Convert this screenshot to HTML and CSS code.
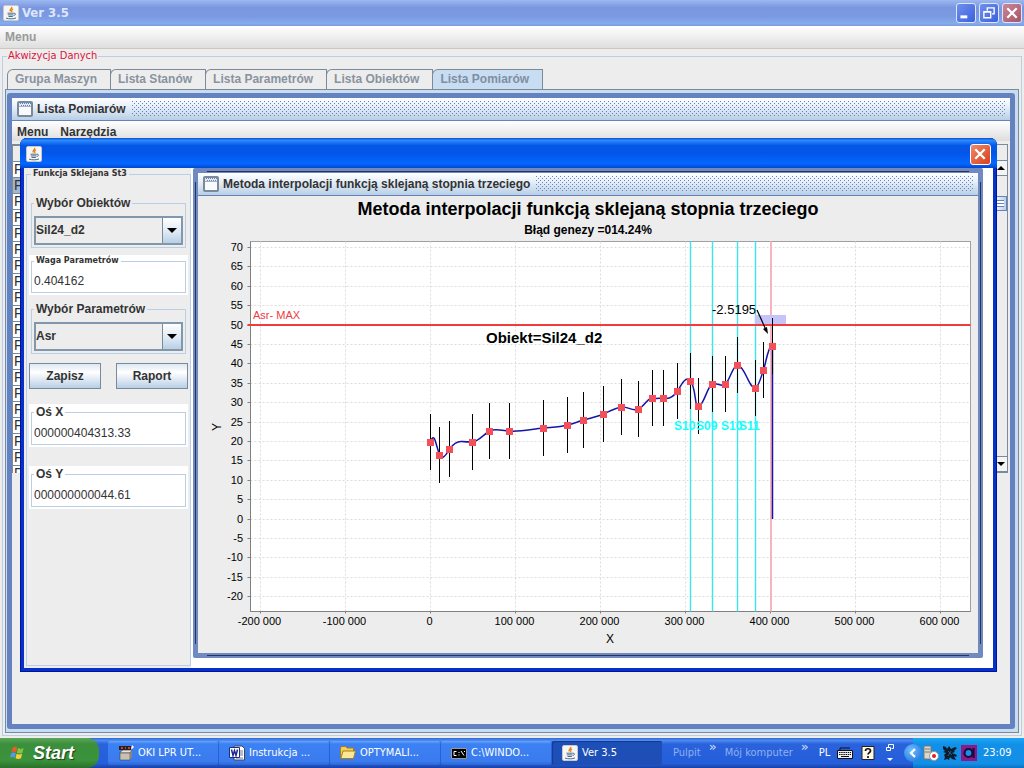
FILE: index.html
```
<!DOCTYPE html>
<html lang="pl">
<head>
    <meta charset="UTF-8">
    <meta name="viewport" content="width=device-width, initial-scale=1.0">
    <title>Ver 3.5</title>
    <link rel="stylesheet" href="styles.css">
</head>
<body>
    <!-- shared icons -->
    <svg class="sprite" aria-hidden="true">
        <symbol id="java" viewBox="0 0 16 16">
            <rect x=".5" y=".5" width="15" height="15" rx="1.5" fill="#f6f6f4" stroke="#c9c9cc"/>
            <path d="M8.6 1.8c1 1.5-2.6 2.400-1.300 4.700M10 3.800c-1.800.900-1.900 1.800-.900 3.200" fill="none" stroke="#e8871e" stroke-width="1.400"/>
            <path d="M4.500 8.200h6.200M4.800 9.900h5.600M5.500 11.500h4.300M10.700 8.300c2.500-.5 2.300 1.900-.1 2.300M3 13.100c2.500 1 8 1 10-.2" fill="none" stroke="#4a6c8e" stroke-width="1"/>
        </symbol>
        <symbol id="frame" viewBox="0 0 16 16">
            <rect x="1" y="1" width="14" height="14" rx="1" fill="#f8fafd" stroke="#7a8a99" stroke-width="2"/>
            <path d="M2 2h12v3H2z" fill="#dfeaf6"/>
            <path d="M3 2.500h11M4 4.500h10" stroke="#6382bf" stroke-dasharray="1 1"/>
            <path d="M2 5.500h12" stroke="#a5b3c2"/>
        </symbol>
        <symbol id="close" viewBox="0 0 21 21">
            <path d="M5 5l11 11M16 5L5 16" stroke="#fff" stroke-width="2.600"/>
        </symbol>
    </svg>

    <header class="titlebar">
        <svg class="icon"><use href="#java"/></svg>
        <span class="app-name">Ver 3.5</span>
        <button class="win-btn" aria-label="Minimalizuj"><svg viewBox="0 0 21 21"><path d="M4 15h8" stroke="#fff" stroke-width="3.500"/></svg></button>
        <button class="win-btn" aria-label="Przywróć"><svg viewBox="0 0 21 21"><path d="M8.500 8V4.500h8v7H14M8 4.500h9" fill="none" stroke="#fff" stroke-width="1.600"/><path d="M4.500 9h8v7h-8zM4 9.500h9" fill="none" stroke="#fff" stroke-width="1.600"/></svg></button>
        <button class="win-btn win-close" aria-label="Zamknij"><svg><use href="#close"/></svg></button>
    </header>
    <nav class="menubar main-menu"><button class="menu-item">Menu</button></nav>

    <main class="workspace">
        <fieldset class="acquisition">
            <legend>Akwizycja Danych</legend>
            <div class="tabs" role="tablist">
                <button class="tab" role="tab">Grupa Maszyn</button>
                <button class="tab" role="tab">Lista Stanów</button>
                <button class="tab" role="tab">Lista Parametrów</button>
                <button class="tab" role="tab">Lista Obiektów</button>
                <button class="tab active" role="tab" aria-selected="true">Lista Pomiarów</button>
            </div>
            <div class="tab-body">
                <section class="iframe list-frame">
                    <div class="iframe-title">
                        <svg class="icon"><use href="#frame"/></svg>
                        <h2>Lista Pomiarów</h2>
                        <i class="bumps"></i>
                    </div>
                    <nav class="menubar"><button class="menu-item">Menu</button><button class="menu-item">Narzędzia</button></nav>
                    <div class="list-pane">
                        <div class="list-view">
                            <table>
                                <thead><tr><th></th></tr></thead>
                                <tbody id="rows"></tbody>
                            </table>
                        </div>
                        <div class="scrollbar">
                            <button class="arrow" aria-label="W górę"><svg viewBox="0 0 10 5"><path d="M0 5l5-5 5 5z"/></svg></button>
                            <div class="track"><div class="thumb"></div></div>
                            <button class="arrow" aria-label="W dół"><svg viewBox="0 0 10 5"><path d="M0 0l5 5 5-5z"/></svg></button>
                        </div>
                    </div>
                </section>
            </div>
        </fieldset>

        <section class="dialog">
            <div class="dialog-title">
                <svg class="icon"><use href="#java"/></svg>
                <button class="win-btn win-close" aria-label="Zamknij"><svg><use href="#close"/></svg></button>
            </div>
            <div class="dialog-body">
                <aside class="side">
                    <fieldset class="spline">
                        <legend class="small">Funkcja Sklejana St3</legend>
                        <fieldset class="group">
                            <legend><label for="object">Wybór Obiektów</label></legend>
                            <div class="combo">
                                <select id="object"><option>Sil24_d2</option></select>
                                <svg viewBox="0 0 10 5"><path d="M0 0l5 5 5-5z"/></svg>
                            </div>
                        </fieldset>
                        <div class="field">
                            <fieldset>
                                <legend class="small"><label for="weight">Waga Parametrów</label></legend>
                                <input type="text" id="weight" value="0.404162">
                            </fieldset>
                        </div>
                        <fieldset class="group">
                            <legend><label for="param">Wybór Parametrów</label></legend>
                            <div class="combo">
                                <select id="param"><option>Asr</option></select>
                                <svg viewBox="0 0 10 5"><path d="M0 0l5 5 5-5z"/></svg>
                            </div>
                        </fieldset>
                        <div class="actions">
                            <button class="btn">Zapisz</button>
                            <button class="btn">Raport</button>
                        </div>
                        <div class="field axis">
                            <fieldset>
                                <legend><label for="axisX">Oś X</label></legend>
                                <input type="text" id="axisX" value="000000404313.33">
                            </fieldset>
                        </div>
                        <div class="field axis">
                            <fieldset>
                                <legend><label for="axisY">Oś Y</label></legend>
                                <input type="text" id="axisY" value="000000000044.61">
                            </fieldset>
                        </div>
                    </fieldset>
                </aside>
                <section class="iframe chart-frame">
                    <div class="iframe-title">
                        <svg class="icon"><use href="#frame"/></svg>
                        <h2>Metoda interpolacji funkcją sklejaną stopnia trzeciego</h2>
                        <i class="bumps"></i>
                    </div>
                    <svg class="chart" id="chart" viewBox="198 196 780 457"></svg>
                </section>
            </div>
        </section>
    </main>

    <footer class="taskbar">
        <button class="start">
            <svg viewBox="0 0 18 18">
                <path d="M3 3c2-1.500 3.500-1.200 5 0L6.800 8.200C5.200 7 3.500 7 1.600 8.200z" fill="#f0592a"/>
                <path d="M9 3.500c2 1.200 4 1.200 6.300 0L14 8.700c-2 1.200-4 1.200-6.200 0z" fill="#83c441"/>
                <path d="M1.400 9.300c2-1.200 3.600-1.200 5.200 0l-1.300 5c-1.500-1.200-3.200-1.200-5.200 0z" fill="#5b95f0"/>
                <path d="M7.500 9.800c2 1.200 4 1.200 6.200 0l-1.300 5c-2 1.200-4 1.200-6.200 0z" fill="#fbcf3b"/>
            </svg>
            Start
        </button>
        <div class="tasks">
            <button class="task">
                <svg viewBox="0 0 16 16"><path d="M1 1h12v4H1z" fill="#222"/><path d="M3 2h2v2H3zM7 2h1v2H7zM10 2h2v2h-2z" fill="#d33"/><path d="M14 0l2 2-3 3z" fill="#fff"/><path d="M2 7l3-2h9l-2 3H2z" fill="#e8e4da" stroke="#333" stroke-width=".6"/><path d="M2 8h10v7H2z" fill="#c9c1b5" stroke="#444" stroke-width=".6"/><path d="M12 8l2-3v7l-2 3z" fill="#8c8478"/></svg>
                OKI LPR UT...
            </button>
            <button class="task">
                <svg viewBox="0 0 16 16"><path d="M5 1h8l2.500 2.500V15H5z" fill="#fff" stroke="#445"/><path d="M10 6h4M10 8h4M10 10h4M7 13h7" stroke="#67a"/><path d="M.5 2.500h10v10H.5z" fill="#fff" stroke="#1c2c8c"/><path d="M2.500 4.500l1.500 6 1.500-5 1.500 5 1.500-6" fill="none" stroke="#1c2c8c" stroke-width="1.500"/></svg>
                Instrukcja ...
            </button>
            <button class="task">
                <svg viewBox="0 0 16 16"><path d="M.5 13V3l1-1.500h4L7 3h6.500v10z" fill="#f3cf5b" stroke="#a57d1d"/><path d="M.8 13.500L3 6h12.500l-2 7.500z" fill="#fbe897" stroke="#a57d1d"/></svg>
                OPTYMALI...
            </button>
            <button class="task">
                <svg viewBox="0 0 16 16"><path d="M.5 3.500h15v10H.5z" fill="#000" stroke="#999"/><path d="M5.500 6.500H3v4h2.500M7.500 7.500h1M7.500 10h1M10 6l3 4.500M13.500 6v1" fill="none" stroke="#fff"/></svg>
                C:\WINDO...
            </button>
            <button class="task active">
                <svg><use href="#java"/></svg>
                Ver 3.5
            </button>
        </div>
        <div class="toolbars">
            <span>Pulpit</span><b>»</b>
            <span>Mój komputer</span><b>»</b>
        </div>
        <div class="lang">
            <span>PL</span>
            <svg viewBox="0 0 16 16"><path d="M3 5V3h10" fill="none" stroke="#111"/><path d="M.5 5.500h15v8H.5z" fill="#eee" stroke="#111"/><path d="M2 7.500h12M2 9.500h12" stroke="#111" stroke-dasharray="1.500 .7"/><path d="M4 11.500h8" stroke="#111"/></svg>
            <svg viewBox="0 0 16 16"><path d="M2 1.500h12v13H2z" fill="#fffbe6" stroke="#222"/><path d="M5.500 6c0-3 5-3 5 0 0 1.500-2.500 1.700-2.500 3.500M8 11v2" fill="none" stroke="#111" stroke-width="1.700"/></svg>
            <svg class="mini" viewBox="0 0 10 20"><path d="M3.500 4.500v-3h5v4h-2M1.500 4.500h4v3h-4z" fill="none" stroke="#fff"/><path d="M2 15h6l-3 3z" fill="#fff"/></svg>
        </div>
        <div class="tray">
            <button class="expand" aria-label="Pokaż ukryte ikony"><svg viewBox="0 0 18 18"><path d="M11 5L7 9l4 4" fill="none" stroke="#fff" stroke-width="2.200"/></svg></button>
            <svg viewBox="0 0 16 16"><path d="M1 1h7v13H1z" fill="#ddd8c8" stroke="#777"/><path d="M2 4h5M2 7h5" stroke="#777"/><circle cx="11" cy="11" r="4.500" fill="#fff" stroke="#999"/><circle cx="11" cy="11" r="2" fill="#e02020"/></svg>
            <svg viewBox="0 0 16 16"><path d="M1 1l3 1 1 2 2-3 2 3 4-2 2 1-3 3 1 1-3 1 5 2-1 2-2-1 2 4-4-1-2-2-1 3-2-1-3 1 1-3-1-2 2-2-3-1 2-1-2-2z" fill="#0c1c2c"/><path d="M6 6l4 4M9 6l-3 5" stroke="#2a5a8a"/></svg>
            <svg viewBox="0 0 16 16"><path d="M0 0h16v16H0z" fill="#8a1a8a"/><circle cx="7.500" cy="8" r="4" fill="#1a8fe8" stroke="#1b0b3b" stroke-width="2.200"/><path d="M12.500 3v10" stroke="#1b0b3b" stroke-width="2.200"/></svg>
            <time>23:09</time>
        </div>
    </footer>
    <script src="script.js"></script>
</body>
</html>
```

FILE: styles.css
```
* {
    box-sizing: border-box;
}
body {
    margin: 0;
    height: 100vh;
    display: flex;
    flex-direction: column;
    overflow: hidden;
    background: #ededed;
    color: #333;
    font: bold 12px/14px "Liberation Sans", Arial, sans-serif;
}
button, input, select {
    font: inherit;
    color: inherit;
    margin: 0;
    padding: 0;
    border: none;
    background: none;
}
fieldset {
    margin: 0;
    padding: 0;
    border: 1px solid #b8cfe5;
    min-width: 0;
}
h2 {
    margin: 0;
    font-size: 12px;
    white-space: nowrap;
}
.sprite {
    position: absolute;
    width: 0;
    height: 0;
}
.icon {
    width: 16px;
    height: 16px;
    flex: none;
}

/* main window */
.titlebar {
    display: flex;
    align-items: center;
    gap: 3px;
    height: 26px;
    padding: 0 2px 0 3px;
    background: linear-gradient(#9cb8f0, #7a96df 30%, #7b9ae2 65%, #84aceb 90%, #7a9ae0);
}
.app-name {
    flex: 1;
    font: bold 13px/16px "DejaVu Sans Condensed", "DejaVu Sans", sans-serif;
    color: #dde6fb;
}
.win-btn {
    width: 20px;
    height: 20px;
    border: 1px solid #dfe6fa;
    border-radius: 3px;
    background: linear-gradient(135deg, #6f90ee, #3c60dc);
}
.win-btn svg {
    display: block;
    width: 18px;
    height: 18px;
}
.titlebar .win-close {
    background: linear-gradient(135deg, #c98798, #a85468);
}
.menubar {
    display: flex;
    gap: 12px;
    flex: none;
    height: 23px;
    padding: 0 5px;
    background: linear-gradient(#fff, #dedede 85%, #ededed 86%);
}
.menu-item {
    height: 21px;
}
.main-menu {
    color: #999;
    border-bottom: 1px solid #ccc8c0;
    background: linear-gradient(#fff, #dedede);
}
.workspace {
    flex: 1;
    min-height: 0;
    padding: 0 2px 2px;
}
.acquisition {
    display: flex;
    flex-direction: column;
    height: 100%;
    padding: 6px 2px 2px;
}
.acquisition > legend {
    margin-left: 2px;
    padding: 0 1px;
    color: #dc143c;
    font: 11px/14px "DejaVu Sans Condensed", "DejaVu Sans", sans-serif;
}
.tabs {
    display: flex;
    padding-left: 2px;
}
.tab {
    height: 20px;
    padding: 0 13px 1px 7px;
    margin-right: -1px;
    border: 1px solid #7a8a99;
    border-bottom: none;
    border-top-left-radius: 6px;
    color: #8893a0;
}
.tab.active {
    background: #c8ddf2;
    color: #7e8ea3;
}
.tab-body {
    flex: 1;
    min-height: 0;
    padding: 3px;
    padding-left: 1px;
    border: 1px solid #7a8a99;
    background: #c8ddf2;
}

/* internal frames */
.iframe {
    display: flex;
    flex-direction: column;
    background: #ededed;
}
.iframe-title {
    display: flex;
    align-items: center;
    gap: 4px;
    flex: none;
    height: 23px;
    padding: 0 5px;
    border-bottom: 1px solid #6382bf;
    background: linear-gradient(#fff, #e6eff8 40%, #b8cfe5);
}
.bumps {
    flex: 1;
    height: 16px;
    margin-left: 2px;
    background:
        conic-gradient(at 1px 1px, transparent 75%, #6382bf 0) 0 0 / 4px 4px,
        conic-gradient(at 1px 1px, transparent 75%, #6382bf 0) 2px 2px / 4px 4px;
}
.list-frame {
    height: 100%;
    border: 5px solid #6382bf;
    border-radius: 3px;
}
.list-pane {
    display: flex;
    height: 329px;
    padding-right: 2px;
}
.list-view {
    flex: 1;
    overflow: hidden;
    border-top: 1px solid #7a8a99;
    background: #fff;
}
table {
    width: 100%;
    border-collapse: collapse;
    font-weight: normal;
    font-size: 14px;
}
th, td {
    height: 16px;
    padding: 0 0 0 1px;
    border: 1px solid #7a8a99;
    line-height: 15px;
    text-align: left;
}
th {
    background: #ededed;
}
tr.selected td {
    background: #a3b8cc;
}
.scrollbar {
    display: flex;
    flex-direction: column;
    width: 16px;
    padding-top: 15px;
    border: 1px solid #7a8a99;
}
.arrow {
    height: 16px;
    padding-left: 2px;
    border: 1px solid #7a8a99;
    border-width: 1px 0;
    background: #f4f4f4;
}
.arrow svg {
    display: block;
    width: 8px;
    height: 4px;
    margin: 0 auto;
}
.track {
    flex: 1;
    padding-top: 20px;
}
.thumb {
    height: 15px;
    border: 1px solid #6382bf;
    background: repeating-linear-gradient(#6382bf 0 1px, #fff 1px 3px) right 2px center / 8px 7px no-repeat, linear-gradient(90deg, #fff, #b8cfe5);
}

/* dialog floating over the list */
.dialog {
    position: absolute;
    inset: 138px 27px 96px 20px;
    display: flex;
    flex-direction: column;
    padding: 0 4px 4px;
    border-radius: 7px 7px 0 0;
    background: #0831c9;
    box-shadow: inset 0 0 0 1px #00139c;
}
.dialog-title {
    display: flex;
    align-items: center;
    justify-content: space-between;
    flex: none;
    height: 30px;
    margin: 0 -4px;
    padding: 2px 6px 0 6px;
    border-radius: 7px 7px 0 0;
    background: linear-gradient(#0f4fd0, #2b8bff 8%, #0558e6 25%, #0355e8 50%, #0467ff 85%, #0247cf);
}
.dialog-title .win-close {
    width: 21px;
    height: 21px;
    border-color: #fff;
    background: linear-gradient(135deg, #ee8a6a, #d8401c);
}
.dialog-body {
    display: flex;
    gap: 2px;
    flex: 1;
    min-height: 0;
    background: #fff;
}
.side {
    flex: none;
    width: 167px;
    padding: 0 0 2px 2px;
    background: #ededed;
}
.spline {
    display: flex;
    flex-direction: column;
    height: 100%;
    padding: 16px 2px 0;
}
legend {
    margin-left: 2px;
    padding: 0 2px;
    line-height: 14px;
}
.small {
    font: bold 8px/12px "DejaVu Sans", sans-serif;
}
.group {
    margin: 0 2px 7px;
    padding: 6px 2px 2px;
}
.group > legend {
    margin-left: 0;
}
.combo {
    display: flex;
    align-items: center;
    height: 29px;
    border: 2px solid #8397ab;
    background: linear-gradient(#fff, #dbe7f3 60%, #b8cfe5) right / 18px 100% no-repeat;
}
.combo select {
    flex: 1;
    min-width: 0;
    height: 25px;
    padding: 0 0 2px;
    border-right: 1px solid #7a8a99;
    border-radius: 0;
    background: #ededed;
    appearance: none;
}
.combo svg {
    width: 10px;
    height: 5px;
    margin: 0 4px;
}
.field {
    margin-bottom: 7px;
    padding: 0 2px 2px;
    background: #fff;
}
.field input {
    display: block;
    width: 100%;
    height: 25px;
    padding: 3px 2px 0;
    font-weight: normal;
}
.actions {
    display: flex;
    justify-content: space-between;
    margin: 2px 0 15px;
}
.btn {
    width: 72px;
    height: 26px;
    border: 1px solid #7a8a99;
    background: linear-gradient(#dde8f3, #fff 35%, #b8cfe5);
}
.axis {
    margin-bottom: 19px;
    padding-top: 1px;
}
.chart-frame {
    flex: 1;
    min-width: 0;
    margin: 0 10px 10px 0;
    padding: 5px;
    border-radius: 2px;
    /* thin dark lines between the resize corners */
    background:
        linear-gradient(#24365f, #24365f) 14px 3px / calc(100% - 28px) 1px no-repeat,
        linear-gradient(#24365f, #24365f) 14px calc(100% - 2px) / calc(100% - 28px) 1px no-repeat,
        linear-gradient(#24365f, #24365f) 2px 14px / 1px calc(100% - 28px) no-repeat,
        linear-gradient(#24365f, #24365f) calc(100% - 2px) 14px / 1px calc(100% - 28px) no-repeat,
        #7089c0;
}

/* chart */
.chart {
    display: block;
    flex: 1;
    width: 100%;
    min-height: 0;
    background: #ededed;
    font: 11px "Liberation Sans", Arial, sans-serif;
}
.chart text {
    fill: #000;
}
.chart .title {
    font: bold 18px "Liberation Sans", Arial, sans-serif;
}
.chart .subtitle {
    font: bold 12px "Liberation Sans", Arial, sans-serif;
}
.chart .object {
    font: bold 15px "Liberation Sans", Arial, sans-serif;
}
.chart .limit {
    fill: #f03c3c;
}
.chart .state {
    font: bold 12px "Liberation Sans", Arial, sans-serif;
    fill: #1ff;
}
.chart .value {
    font-size: 13px;
}
.chart .axis-name {
    font-size: 12px;
}

/* taskbar */
.taskbar {
    display: flex;
    flex: none;
    height: 30px;
    background: linear-gradient(#3168d5, #4a8cf0 8%, #2b62dc 20%, #245edb 85%, #1941a5);
    color: #fff;
    font: 11px/14px "DejaVu Sans Condensed", "DejaVu Sans", sans-serif;
}
.start {
    display: flex;
    align-items: center;
    gap: 7px;
    width: 99px;
    padding-left: 10px;
    border-radius: 0 12px 12px 0;
    background: linear-gradient(#5aa85a, #3c8f3c 20%, #3a933a 75%, #2b6f2b);
    font: italic bold 18px "Liberation Sans", Arial, sans-serif;
    text-shadow: 1px 1px 1px #1a3f1a;
}
.start svg {
    width: 18px;
    height: 18px;
}
.tasks {
    display: flex;
    gap: 1px;
    padding: 3px 0 3px 9px;
}
.task {
    display: flex;
    align-items: center;
    gap: 4px;
    width: 110px;
    padding-left: 10px;
    border-radius: 2px;
    background: linear-gradient(#6aa4fb, #3c81f3 12%, #3a7bee 85%, #2c66d8);
    white-space: nowrap;
}
.task.active {
    background: #1e4fb7;
    box-shadow: inset 1px 1px 1px #153a8c;
}
.taskbar svg {
    width: 16px;
    height: 16px;
    flex: none;
}
.toolbars, .lang {
    display: flex;
    align-items: center;
    white-space: nowrap;
}
.toolbars {
    gap: 8px;
    padding-left: 11px;
    color: #8fb0f2;
}
.toolbars b {
    align-self: flex-start;
    font: 13px/18px "DejaVu Sans", sans-serif;
    color: #cfdffc;
}
.lang {
    gap: 7px;
    padding-left: 10px;
}
.lang .mini {
    width: 10px;
    height: 20px;
    margin-left: 2px;
}
.tray {
    display: flex;
    align-items: center;
    gap: 3px;
    flex: none;
    width: 111px;
    margin-left: auto;
    background: linear-gradient(#1aa5f0, #17a0f0 8%, #1290e8 20%, #1290e8 85%, #0c70c0);
}
.expand {
    width: 18px;
    height: 18px;
    margin: 0 -2px 0 -9px;
    border-radius: 50%;
    background: radial-gradient(circle at 40% 35%, #6cc0ff, #1868d8);
}
.expand svg {
    display: block;
    width: 18px;
    height: 18px;
}
.tray time {
    margin-left: 3px;
}
```

FILE: script.js
```
const NS = 'http://www.w3.org/2000/svg';
const chart = document.getElementById('chart');

function add(tag, attrs, text) {
    const el = document.createElementNS(NS, tag);
    for (const key in attrs) el.setAttribute(key, attrs[key]);
    if (text !== undefined) el.textContent = text;
    chart.appendChild(el);
    return el;
}
function line(x1, y1, x2, y2, stroke, extra) {
    add('line', Object.assign({ x1, y1, x2, y2, stroke }, extra));
}

// table rows, the second one is selected
const rows = document.getElementById('rows');
for (let i = 0; i < 20; i++) {
    const tr = document.createElement('tr');
    if (i === 1) tr.className = 'selected';
    tr.innerHTML = '<td>F</td>';
    rows.appendChild(tr);
}

// plot area
const left = 250.5, right = 970.5, top_ = 241.5, bottom = 611.5;
const px = v => Math.round(430 + v * 0.00085) + 0.5;
const py = v => Math.round(518.5 - v * 3.88) + 0.5;

add('rect', { x: left, y: top_, width: right - left, height: bottom - top_, fill: '#fff', stroke: '#a0a0a0' });
for (let v = -20; v <= 70; v += 5) {
    line(left, py(v), right, py(v), '#dcdcdc', { 'stroke-dasharray': '2 2' });
    line(left - 3, py(v), left, py(v), '#808080');
    add('text', { x: 243, y: py(v) + 3.5, 'text-anchor': 'end' }, v);
}
for (let v = -200000; v <= 600000; v += 100000) {
    line(px(v), top_, px(v), bottom, '#dcdcdc', { 'stroke-dasharray': '2 2' });
    line(px(v), bottom, px(v), bottom + 2, '#808080');
    const label = v === 0 ? '0' : v / 1000 + ' 000';
    add('text', { x: px(v) - 1, y: 625, 'text-anchor': 'middle' }, label);
}
line(left, top_, left, bottom, '#808080');
line(left, bottom, right, bottom, '#808080');

// machine states
[690.5, 712.5, 737.5, 755.5].forEach(x => line(x, top_, x, bottom, '#3ee4e8', { 'stroke-width': 1.4 }));
line(771, top_, 771, bottom, '#f8b4bc', { 'stroke-width': 2 });
add('rect', { x: 755, y: 315, width: 31, height: 9, fill: '#c4c4fa' });

// alarm limit
line(left - 3, 325, right, 325, '#f23c3c', { 'stroke-width': 2 });
add('text', { x: 253, y: 319, class: 'limit' }, 'Asr- MAX');

const points = [
    [430.5, 442], [439.5, 455], [449.5, 449], [472.5, 442], [489.5, 431], [509.5, 431],
    [543.5, 428], [567.5, 425], [583.5, 420], [603.5, 414], [621.5, 407], [638.5, 409],
    [652.5, 398], [663.5, 398], [677.5, 391], [690.5, 381], [698.5, 406], [712.5, 384],
    [725.5, 384], [737.5, 365], [755.5, 388], [763.5, 370], [772.5, 346]
];
add('path', {
    d: 'M430.5 442C431 438 434 436 435 440L439.500 455C441 459 444 459 449.500 449C454 443 458 441 462 441.500S470 442 472.500 442C479 441 484 434 489.500 431C496 428 502 431 509.500 431C520 432 532 429 543.500 428S560 427 567.500 425S577 422 583.500 420S597 417 603.500 414S615 408 621.500 407S632 412 638.500 409S648 397 652.500 398S659 398 663.500 398C670 400 674 396 677.500 391S685 375 690.500 381S695 411 698.500 406C704 406 707 386 712.500 384S721 388 725.500 384S733 365 737.500 365C745 366 749 389 755.500 388C759 386 761 377 763.500 370S768 346 772.500 344V519',
    fill: 'none', stroke: '#1414a8', 'stroke-width': 1.5
});
points.forEach(([x, y]) => {
    line(x, y - 28, x, y + 28, '#000', { 'shape-rendering': 'crispEdges' });
    add('rect', { x: x - 3.5, y: y - 3, width: 7, height: 7, fill: '#f4505a' });
});

// annotations
[['S10', 674], ['S09', 696], ['S10', 721], ['S11', 739]].forEach(([name, x]) => {
    add('text', { x, y: 430, class: 'state' }, name);
});
line(757, 310, 766, 330, '#000', { 'stroke-width': 1.2 });
add('path', { d: 'M768 334l-5-5 4-2z', fill: '#000' });
add('text', { x: 712, y: 314, class: 'value' }, '-2.5195');
add('text', { x: 486, y: 343, class: 'object' }, 'Obiekt=Sil24_d2');
add('text', { x: 588, y: 215, 'text-anchor': 'middle', class: 'title' }, 'Metoda interpolacji funkcją sklejaną stopnia trzeciego');
add('text', { x: 588, y: 234, 'text-anchor': 'middle', class: 'subtitle' }, 'Błąd genezy =014.24%');
add('text', { x: 610, y: 643, 'text-anchor': 'middle', class: 'axis-name' }, 'X');
add('text', { transform: 'translate(221 427) rotate(-90)', 'text-anchor': 'middle', class: 'axis-name' }, 'Y');
```
